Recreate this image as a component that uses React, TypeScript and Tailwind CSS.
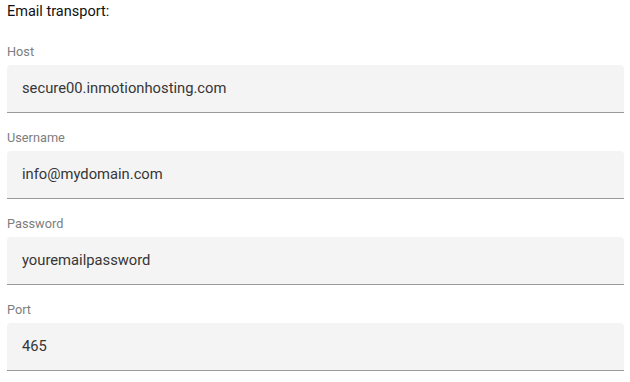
import React from "react";

const fields = [
  { label: "Host", value: "secure00.inmotionhosting.com" },
  { label: "Username", value: "info@mydomain.com" },
  { label: "Password", value: "youremailpassword" },
  { label: "Port", value: "465" },
];

export default function App() {
  return (
    <div
      className="w-[630px] h-[382px] bg-white pl-[7px] pr-[6px] pt-[2px]"
      style={{ fontFamily: "Roboto, 'Liberation Sans', sans-serif" }}
    >
      <div className="text-[14.5px] leading-[20px] font-normal text-[#111111]">Email transport:</div>
      <div className="mt-[22px] flex flex-col gap-[17px]">
        {fields.map((f) => (
          <div key={f.label} className="flex flex-col">
            <div className="text-[12.75px] leading-[16px] text-[#7d7d7d] mb-[5px]">{f.label}</div>
            <div className="h-[48px] bg-[#f4f4f4] rounded-t-[4px] border-b border-[#9a9a9a] flex items-center pl-[15px] text-[14.75px] text-[#363636]">
              {f.value}
            </div>
          </div>
        ))}
      </div>
    </div>
  );
}
